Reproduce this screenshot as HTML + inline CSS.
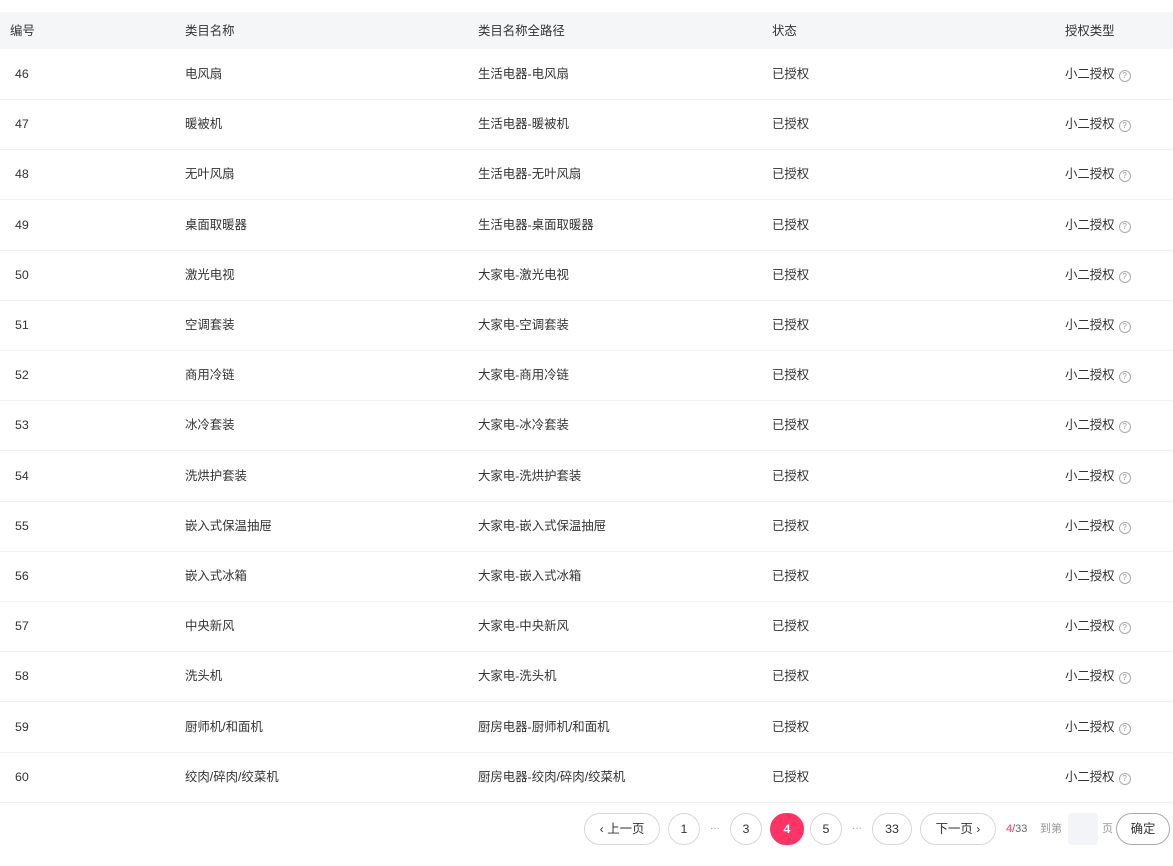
<!DOCTYPE html><html><head><meta charset="utf-8"><style>
body{margin:0;width:1173px;height:866px;background:#fff;font-family:"Liberation Sans","Noto Sans CJK SC",sans-serif;font-size:12.4px;color:#333;position:relative;overflow:hidden}
.hd{position:absolute;top:12px;left:0;width:1173px;height:37px;background:#f5f6f8}
.c{position:absolute;white-space:nowrap;line-height:16px}
.row{position:absolute;left:0;width:1173px;height:50px;border-bottom:1px solid #f0f1f3}
.q{display:inline-block;width:10px;height:10px;border:1px solid #aaa;border-radius:50%;font-size:8px;line-height:10px;text-align:center;color:#999;margin-left:4px;vertical-align:0px}
.b{position:absolute;top:813px;height:30px;border:1px solid #d5d7db;border-radius:16px;text-align:center;line-height:30px;font-size:12.4px;color:#333;box-sizing:content-box}
.d{position:absolute;top:823px;color:#999;font-size:10px}
</style></head><body>
<div class="hd"></div>
<div class="c" style="top:23px;left:10px">编号</div>
<div class="c" style="top:23px;left:185px">类目名称</div>
<div class="c" style="top:23px;left:478px">类目名称全路径</div>
<div class="c" style="top:23px;left:772px">状态</div>
<div class="c" style="top:23px;left:1065px">授权类型</div>
<div id="rows"></div>
<script>
var d=[["46","电风扇","生活电器-电风扇"],["47","暖被机","生活电器-暖被机"],["48","无叶风扇","生活电器-无叶风扇"],["49","桌面取暖器","生活电器-桌面取暖器"],["50","激光电视","大家电-激光电视"],["51","空调套装","大家电-空调套装"],["52","商用冷链","大家电-商用冷链"],["53","冰冷套装","大家电-冰冷套装"],["54","洗烘护套装","大家电-洗烘护套装"],["55","嵌入式保温抽屉","大家电-嵌入式保温抽屉"],["56","嵌入式冰箱","大家电-嵌入式冰箱"],["57","中央新风","大家电-中央新风"],["58","洗头机","大家电-洗头机"],["59","厨师机/和面机","厨房电器-厨师机/和面机"],["60","绞肉/碎肉/绞菜机","厨房电器-绞肉/碎肉/绞菜机"]];
var h="";d.forEach(function(r,i){var t=49+i*50.2;h+='<div class="row" style="top:'+t+'px"></div>';var y=t+17;
h+='<div class="c" style="top:'+y+'px;left:15px">'+r[0]+'</div><div class="c" style="top:'+y+'px;left:185px">'+r[1]+'</div><div class="c" style="top:'+y+'px;left:478px">'+r[2]+'</div><div class="c" style="top:'+y+'px;left:772px">已授权</div><div class="c" style="top:'+y+'px;left:1065px">小二授权<span class="q">?</span></div>';});
document.getElementById("rows").innerHTML=h;
</script>
<div class="b" style="left:584px;width:74px">‹ 上一页</div>
<div class="b" style="left:668px;width:30px">1</div>
<div class="d" style="left:710px">···</div>
<div class="b" style="left:730px;width:30px">3</div>
<div class="b" style="left:770px;width:32px;background:#ff3366;border-color:#ff3366;color:#fff;font-weight:bold">4</div>
<div class="b" style="left:810px;width:30px">5</div>
<div class="d" style="left:852px">···</div>
<div class="b" style="left:872px;width:38px">33</div>
<div class="b" style="left:920px;width:74px">下一页 ›</div>
<div class="c" style="top:821px;left:1006px;font-size:11px;color:#666"><span style="color:#ff3366">4</span>/33</div>
<div class="c" style="top:821px;left:1040px;font-size:11px;color:#999">到第</div>
<div style="position:absolute;top:813px;left:1068px;width:30px;height:32px;background:#f3f4f7;border-radius:4px"></div>
<div class="c" style="top:821px;left:1102px;font-size:11px;color:#999">页</div>
<div class="b" style="left:1116px;width:52px;border-color:#aaa">确定</div>
</body></html>
